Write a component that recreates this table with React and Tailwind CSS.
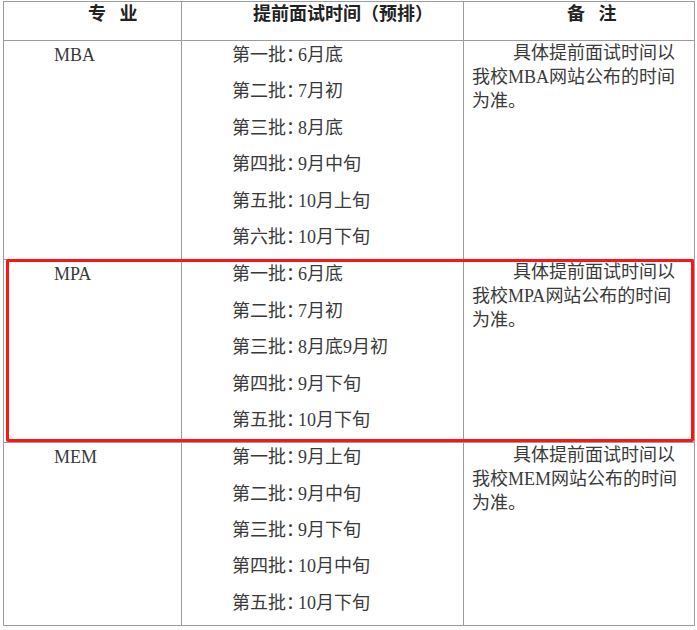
const sections = [
  {
    name: "MBA",
    items: ["6月底", "7月初", "8月底", "9月中旬", "10月上旬", "10月下旬"],
  },
  {
    name: "MPA",
    items: ["6月底", "7月初", "8月底9月初", "9月下旬", "10月下旬"],
  },
  {
    name: "MEM",
    items: ["9月上旬", "9月中旬", "9月下旬", "10月中旬", "10月下旬"],
  },
];

const batchNames = ["第一批", "第二批", "第三批", "第四批", "第五批", "第六批"];

const Section = ({ section }) => (
  <>
    <div className="border-r border-b border-[#9c9c9c] pl-[50px] text-[18px] leading-[28px] text-[#3a3a3a]">
      {section.name}
    </div>
    <div className="border-r border-b border-[#9c9c9c] pl-[50px] flex flex-col text-[18px] text-[#3a3a3a]">
      {section.items.map((item, i) => (
        <div key={i} className="h-[36.4px] leading-[28px] whitespace-nowrap">
          {batchNames[i]}
          <span className="mr-[3px] [font-feature-settings:'halt']">：</span>
          {item}
        </div>
      ))}
    </div>
    <div className="border-r border-b border-[#9c9c9c] pl-[8px] pr-[10px] text-[18px] leading-[24px] text-[#3a3a3a]">
      <p className="indent-[41px]">具体提前面试时间以我校{section.name}网站公布的时间为准。</p>
    </div>
  </>
);

export default function App() {
  return (
    <div className="relative w-[697px] h-[630px] bg-white overflow-hidden font-['Liberation_Serif','Noto_Sans_CJK_SC',serif]">
      <div className="ml-[3px] mt-[1px] w-[692px] border-l border-t border-[#9c9c9c] grid grid-cols-[178px_282px_231px]">
        {/* header */}
        <div className="h-[39px] border-r border-b border-[#9c9c9c] pl-[84px] text-[18px] leading-[24px] font-bold text-[#222] [word-spacing:9px]">
          专 业
        </div>
        <div className="h-[39px] border-r border-b border-[#9c9c9c] pl-[71px] text-[18px] leading-[24px] font-bold text-[#222] whitespace-nowrap">
          提前面试时间（预排）
        </div>
        <div className="h-[39px] border-r border-b border-[#9c9c9c] pl-[103px] text-[18px] leading-[24px] font-bold text-[#222] [word-spacing:9px]">
          备 注
        </div>

        {sections.map((s) => (
          <Section key={s.name} section={s} />
        ))}
      </div>

      {/* highlight around MPA */}
      <div className="absolute left-[6px] top-[259px] w-[688px] h-[183px] border-[3px] border-[#ff1414] rounded-[2px]" />
    </div>
  );
}
